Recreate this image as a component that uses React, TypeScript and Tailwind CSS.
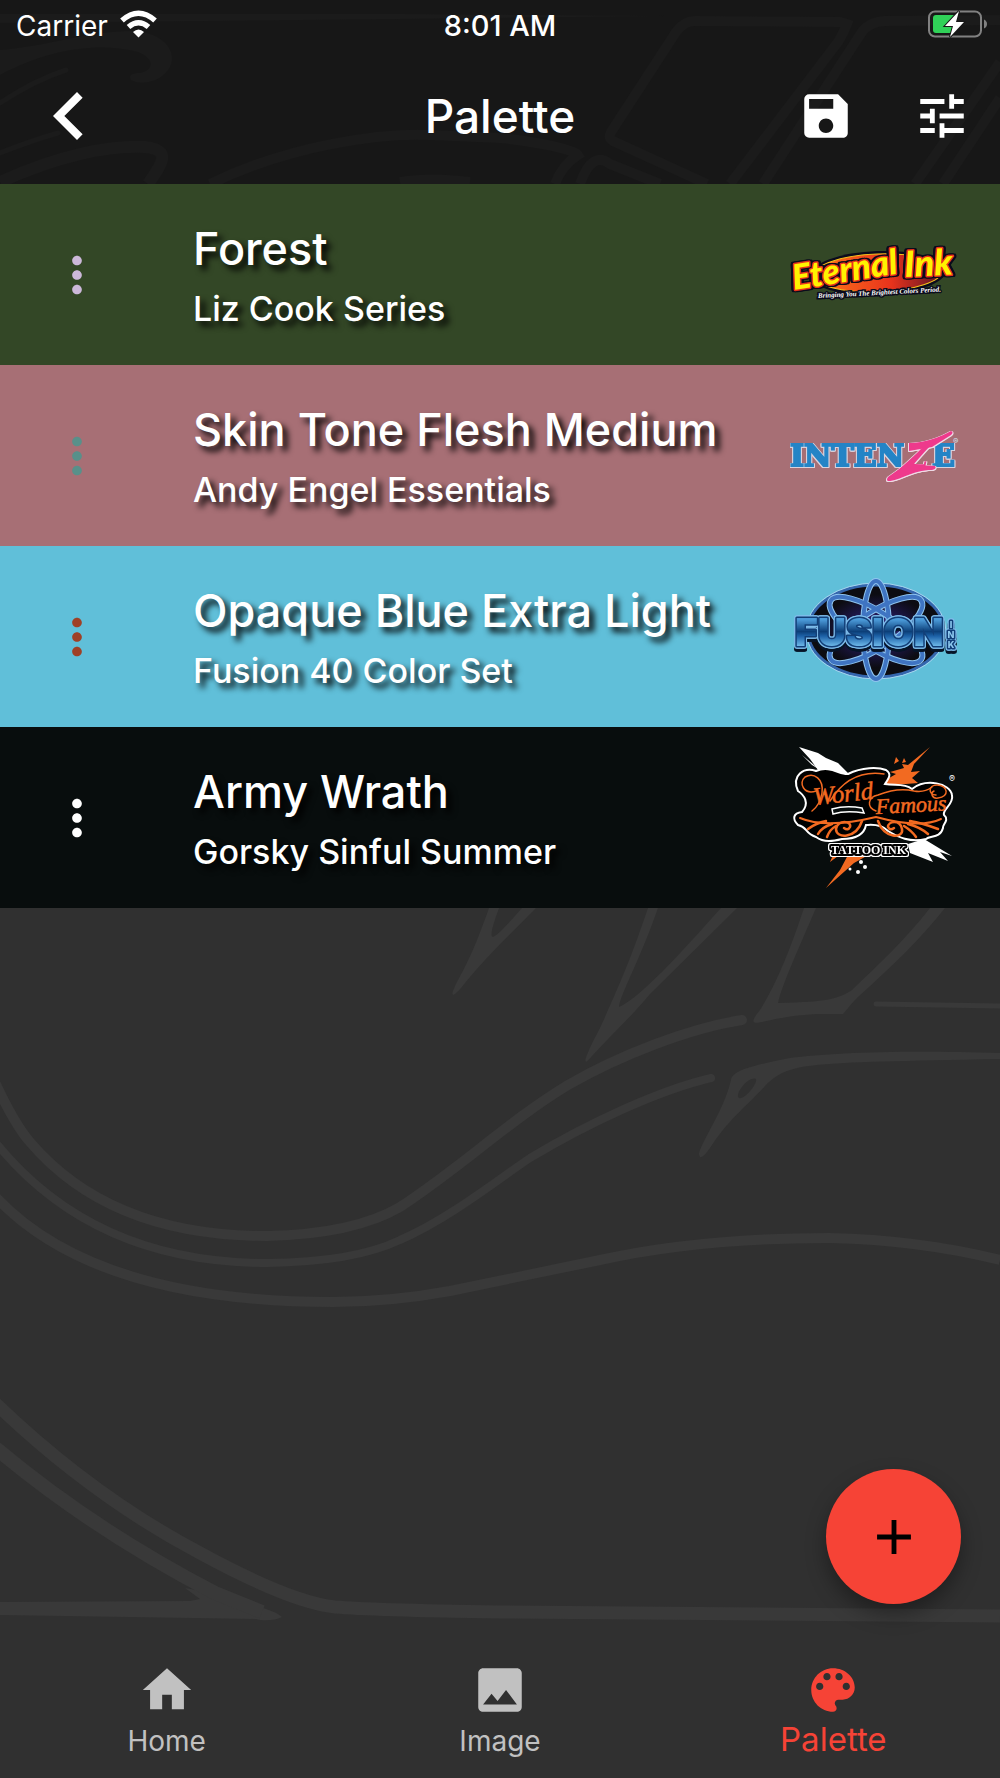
import { useState } from 'react'
import type { ReactNode } from 'react'
import {
  MdAdd, MdChevronLeft, MdHome, MdImage, MdMoreVert, MdSave, MdTune,
} from 'react-icons/md'

// Faint line art behind the whole screen
function Backdrop() {
  return (
    <svg
      className="absolute inset-0 h-full w-full"
      viewBox="0 0 1000 1778"
      preserveAspectRatio="xMidYMin slice"
      fill="none"
      stroke="#393939"
      strokeWidth="10"
      aria-hidden="true"
    >
      <g fill="#393939" stroke="none">
        <path d="M0 14L400 14L665 16L400 19L0 23z" />
        <path d="M0 50C50 46 90 30 135 31C172 34 182 62 162 76C152 84 138 84 131 80C128 75 132 73 140 73C155 70 154 58 138 52C100 42 50 48 0 75z" />
        <path d="M489 908C476 945 468 962 457 982C448 1000 454 996 461 988C486 956 512 933 536 908L522 908C508 924 498 935 493 937C489 937 494 922 499 908z" />
        <path d="M648 908C632 955 622 980 600 1028C580 1066 584 1066 592 1056C612 1034 630 1018 650 994L737 908L721 908C680 954 640 998 619 1007C620 995 640 960 658 908z" />
        <path d="M804 908C790 950 776 985 760 1010C750 1022 752 1024 762 1022C802 1013 815 1014 843 1014C848 1008 852 1003 858 997C890 968 920 940 945 908L930 908C905 940 878 965 852 990C840 998 830 1002 778 1003C782 985 798 950 816 908z" />
        <path fillRule="evenodd" d="M1000 1053C897 1050 830 1053 790 1058C755 1065 732 1070 731 1080C724 1110 705 1135 699 1153C699 1160 703 1158 710 1148C728 1120 745 1108 765 1086C790 1062 800 1063 1000 1059zM756 1079C750 1076 737 1090 738 1097C742 1103 758 1084 756 1079z" />
        <path d="M0 1602L190 1601L200 1599L185 1588L230 1596C255 1606 275 1610 282 1617C275 1621 262 1621 256 1619L0 1615z" />
      </g>
      <path d="M0 103Q35 80 66 70M0 153Q30 141 58 133M876 1004L1000 1006" strokeWidth="5" strokeLinecap="round" />
      <path d="M0 182C60 155 110 145 145 147C170 150 165 160 148 184" strokeWidth="12" />
      <path d="M210 184C290 145 380 133 430 135L500 138C540 142 575 150 578 155Q562 165 555 184" />
      <path d="M707 184L613 141Q608 138 611 132L676 32Q684 21 695 21L840 22L847 24Q844 32 838 42L730 184" />
      <path d="M1000 20L885 21Q867 22 860 35L763 184M1000 62L915 184M1000 98L943 184M580 184Q592 150 610 164L660 184M400 182Q430 177 470 182" />
      <path d="M-8 1076Q14 1124 30 1142Q110 1236 267 1236Q354 1234 400 1207C460 1168 510 1120 568 1085C620 1055 690 1028 742 1020" strokeLinecap="round" />
      <path d="M-8 1138Q90 1263 267 1263Q354 1262 400 1240C450 1218 500 1178 530 1158C590 1122 660 1090 711 1078" strokeWidth="8" strokeLinecap="round" />
      <path d="M-8 1193Q90 1302 333 1302Q390 1302 450 1291L600 1260Q700 1238 829 1238Q920 1240 1000 1260" />
      <path d="M-8 1400Q90 1495 200 1553Q290 1602 335 1607Q370 1610 500 1612L1000 1616" strokeWidth="13" />
      <path d="M-8 1445Q90 1528 215 1593L262 1612" strokeWidth="14" />
    </svg>
  )
}

function WifiIcon() {
  return (
    <svg className="h-7 w-[37px]" viewBox="0 0 37 28" fill="none" stroke="white" aria-hidden="true">
      <path d="M2 10.5Q18.500 -4 35 10.500" strokeWidth="5.500" />
      <path d="M8.500 17Q18.500 8.500 28.500 17" strokeWidth="5.500" />
      <path d="M13 22Q18.500 17 24 22L18.500 27.500z" fill="white" stroke="none" />
    </svg>
  )
}

function BatteryIcon() {
  return (
    <svg className="h-7 w-[60px]" viewBox="0 0 60 28" aria-hidden="true">
      <rect x="1" y="1.500" width="52" height="25" rx="6" fill="none" stroke="#818181" strokeWidth="2" />
      <rect x="5" y="5" width="23" height="18" rx="3" fill="#30d158" />
      <path d="M56 9.500Q59 11 59 14T56 18.500z" fill="#818181" />
      <path d="M31 1L17 16H25L22 27L36 12H28z" fill="white" stroke="#171717" strokeWidth="2" paintOrder="stroke" />
    </svg>
  )
}

function PaletteIcon({ className }: { className?: string }) {
  return (
    <svg className={className} viewBox="0 0 24 24" fill="currentColor" aria-hidden="true">
      <path d="M12 3c-4.970 0-9 4.030-9 9s4.030 9 9 9c.830 0 1.500-.670 1.500-1.500 0-.390-.150-.740-.390-1.010-.230-.260-.380-.610-.380-.990 0-.830.670-1.500 1.500-1.500H16c2.760 0 5-2.240 5-5 0-4.420-4.030-8-9-8zm-5.500 9c-.830 0-1.500-.670-1.500-1.500S5.670 9 6.500 9 8 9.670 8 10.500 7.330 12 6.500 12zm3-4C8.670 8 8 7.330 8 6.500S8.670 5 9.500 5s1.500.670 1.500 1.500S10.330 8 9.500 8zm5 0c-.830 0-1.500-.670-1.500-1.500S13.670 5 14.500 5s1.500.670 1.500 1.500S15.330 8 14.500 8zm3 4c-.830 0-1.500-.670-1.500-1.500S16.670 9 17.500 9s1.500.670 1.500 1.500-.670 1.500-1.500 1.500z" />
    </svg>
  )
}

function EternalInkLogo() {
  return (
    <svg className="h-[145px] w-[170px]" viewBox="0 0 170 145" role="img" aria-label="Eternal Ink">
      <defs>
        <linearGradient id="eternal" x1="0" x2="1">
          <stop offset="0" stopColor="#ff7a1a" />
          <stop offset="0.6" stopColor="#e8331c" />
          <stop offset="1" stopColor="#5b1426" />
        </linearGradient>
      </defs>
      <ellipse cx="88" cy="71" rx="68" ry="22" fill="#0b0b1c" transform="rotate(-2 88 71)" />
      <ellipse cx="88" cy="71" rx="64" ry="19" fill="url(#eternal)" stroke="#f5c21b" transform="rotate(-2 88 71)" />
      <g
        className="[filter:drop-shadow(2px_0_0_#0b0b1c)_drop-shadow(-2px_0_0_#0b0b1c)_drop-shadow(0_1px_0_#0b0b1c)_drop-shadow(0_-1px_0_#0b0b1c)]"
        fontFamily="Lato, sans-serif"
        fontStyle="italic"
        fontWeight="900"
        stroke="#e8331c"
        strokeWidth="3"
        strokeLinejoin="round"
        fill="#fff200"
        paintOrder="stroke"
      >
        <text x="4" y="88" fontSize="35" transform="rotate(-9 4 88)">Eternal</text>
        <text x="115" y="75" fontSize="36" transform="rotate(-3 115 75)">Ink</text>
      </g>
      <text x="28" y="96" fontSize="7" fontFamily="'Liberation Serif', serif" fontStyle="italic" fontWeight="700" fill="white" stroke="#0b0b1c" strokeWidth="3" paintOrder="stroke" transform="rotate(-3 28 96)">
        Bringing You The Brightest Colors Period.
      </text>
    </svg>
  )
}

function IntenzeLogo() {
  return (
    <svg className="h-[145px] w-[170px]" viewBox="0 0 170 145" role="img" aria-label="Intenze">
      <g
        className="[filter:drop-shadow(1px_0_0_#d9d3de)_drop-shadow(-1px_0_0_#d9d3de)_drop-shadow(0_1px_0_#d9d3de)]"
        fontFamily="'DejaVu Serif', serif"
        fontWeight="700"
        fontSize="30"
        fill="#2484c6"
        stroke="#2484c6"
        strokeWidth="2"
      >
        <text x="0" y="83">INTEN</text>
        <text x="142" y="83">E</text>
      </g>
      <g className="[filter:drop-shadow(1px_0_0_#eedbe6)_drop-shadow(-1px_0_0_#eedbe6)_drop-shadow(0_1px_0_#eedbe6)]" fill="#ee3a8c">
        <path d="M119 60C135 60 150 54 161 48Q164 49 161 52L142 64L119 68z" />
        <path d="M119 79C132 84 138 82 145 83Q147 86 142 87C122 87 110 98 98 98Q96 97 98 94z" />
        <text x="118" y="83" fontFamily="'DejaVu Serif', serif" fontStyle="italic" fontWeight="700" fontSize="28">Z</text>
        <path d="M152 53L112 87L104 91L138 60z" />
      </g>
      <text x="163" y="61" fontSize="8" fontFamily="Inter, sans-serif" fill="#cfe3f2">®</text>
    </svg>
  )
}

function FusionLogo() {
  return (
    <svg className="h-[145px] w-[170px]" viewBox="0 0 170 145" role="img" aria-label="Fusion Ink">
      <defs>
        <radialGradient id="core">
          <stop offset="0" stopColor="#4a35b0" />
          <stop offset="0.4" stopColor="#1f1850" />
          <stop offset="0.8" stopColor="#0c0c12" />
        </radialGradient>
        <linearGradient id="steel" x1="0" y1="0" x2="0" y2="1">
          <stop offset="0.25" stopColor="#4b9ad8" />
          <stop offset="0.5" stopColor="#0c3f78" />
          <stop offset="0.6" stopColor="#1d62a8" />
          <stop offset="0.8" stopColor="#69b4e6" />
        </linearGradient>
      </defs>
      <ellipse cx="86" cy="67" rx="68" ry="46" fill="url(#core)" stroke="#3566ad" strokeWidth="3" />
      <ellipse cx="86" cy="67" rx="70" ry="48" fill="none" stroke="#a6d3ee" />
      <g fill="none" stroke="#8fc4ee" strokeWidth="6">
        <ellipse cx="86" cy="66" rx="13" ry="49" />
        <ellipse cx="86" cy="66" rx="54" ry="18" transform="rotate(33 86 66)" />
        <ellipse cx="86" cy="66" rx="54" ry="18" transform="rotate(-33 86 66)" />
      </g>
      <g fill="none" stroke="#3f74c2" strokeWidth="4">
        <ellipse cx="86" cy="66" rx="13" ry="49" />
        <ellipse cx="86" cy="66" rx="54" ry="18" transform="rotate(33 86 66)" />
        <ellipse cx="86" cy="66" rx="54" ry="18" transform="rotate(-33 86 66)" />
      </g>
      <g
        className="[filter:drop-shadow(1px_0_0_#7dbbea)_drop-shadow(-1px_0_0_#7dbbea)_drop-shadow(0_-1px_0_#7dbbea)_drop-shadow(0_1px_0_#7dbbea)_drop-shadow(0_3px_0_#061428)]"
        fontFamily="Inter, sans-serif"
        stroke="#123f78"
        strokeWidth="3"
        strokeLinejoin="round"
        paintOrder="stroke"
      >
        <text x="5" y="82" fontWeight="900" fontSize="39" fill="url(#steel)">FUSION</text>
        <g fontWeight="800" fontSize="9" fill="#8cc8ee" textAnchor="middle">
          <text x="161" y="64">I</text>
          <text x="161" y="74">N</text>
          <text x="161" y="84">K</text>
        </g>
      </g>
    </svg>
  )
}

function WorldFamousLogo() {
  return (
    <svg className="h-[145px] w-[170px]" viewBox="0 0 170 145" role="img" aria-label="World Famous Tattoo Ink">
      {/* splatter */}
      <g fill="white">
        <path d="M9 2L28 8L36 13L48 18L60 30L50 38L34 28L28 25L20 14z" />
        <path d="M12 10L30 25L22 20z" />
        <path d="M118 99L134 94L162 111L150 107L158 116L138 108L143 117L120 108z" />
        <circle cx="71" cy="117" r="2" />
        <circle cx="75" cy="122" r="2" />
        <circle cx="60" cy="124" r="1.500" />
        <circle cx="68" cy="127" r="2" />
      </g>
      <g fill="#f26a21">
        <path d="M140 2L118 20L112 19L114 23L100 27L106 29L94 36L92 41L128 38L122 33L130 26L121 27L124 19z" />
        <path d="M106 12L109 16L104 19zM114 13L116 17L112 18z" />
        <path d="M82 108L64 118L36 143L50 125L58 110zM40 117L52 108L44 108z" />
      </g>
      <path
        d="M8 46C1 30 14 22 26 26C40 20 50 30 58 29C72 22 88 22 96 25C102 29 99 33 95 39C105 41 114 38 122 44C136 33 160 38 162 50C164 60 152 64 154 70C160 75 152 80 153 83C150 94 140 90 136 94C120 98 108 92 98 86C90 78 80 80 76 80C74 90 66 94 52 94C44 96 34 98 26 92C14 88 18 82 8 80C2 74 3 68 12 67C20 58 14 50 8 46z"
        fill="black"
        stroke="white"
        strokeWidth="2"
      />
      <path d="M42 64Q56 60 72 63L74 68Q56 65 43 69z" fill="#080d0d" stroke="white" strokeWidth="1.500" />
      <g fill="none" stroke="#f26a21" strokeWidth="1.500" strokeLinecap="round">
        <path d="M26 46C14 50 8 38 15 32C24 27 34 34 32 48Q30 60 22 66" />
        <path d="M40 56Q60 24 94 29" />
        <path d="M86 66C76 62 78 52 88 50Q108 42 124 46Q134 48 142 42" />
        <path d="M146 50C138 50 138 40 147 40C158 40 160 52 148 53C142 54 140 48 144 46" />
        <path d="M10 73Q36 84 86 72Q130 84 151 74" strokeWidth="2" />
        <path d="M36 76Q26 78 18 84M42 79Q32 82 28 89M46 81Q40 84 37 92M72 76C66 94 46 94 46 84C48 74 62 76 60 82Q58 86 54 83" strokeWidth="2.500" />
        <path d="M120 76Q132 78 148 84M118 79Q130 82 138 89M114 81Q122 86 126 92M88 76C94 94 114 94 112 84C110 74 98 76 98 82Q100 86 104 83" strokeWidth="2.500" />
      </g>
      <g fontFamily="'Liberation Serif', serif" fontStyle="italic" fill="#f26a21" stroke="#f26a21" strokeWidth="0.500">
        <text x="24" y="60" fontSize="25" transform="rotate(-6 24 60)">World</text>
        <text x="86" y="69" fontSize="22" transform="rotate(-3 86 69)">Famous</text>
      </g>
      <text
        className="[filter:drop-shadow(1px_0_0_white)_drop-shadow(-1px_0_0_white)_drop-shadow(0_1px_0_white)_drop-shadow(0_-1px_0_white)]"
        x="41"
        y="109"
        fontSize="12"
        fontFamily="'Liberation Serif', serif"
        fontWeight="700"
        fill="white"
        stroke="black"
        strokeWidth="4"
        strokeLinejoin="round"
        paintOrder="stroke"
      >
        TATTOO INK
      </text>
      <text x="159" y="37" fontSize="9" fontFamily="Inter, sans-serif" fill="white">®</text>
    </svg>
  )
}

interface Ink {
  name: string
  series: string
  row: string
  dots: string
  logo: ReactNode
}

const inks: Ink[] = [
  { name: 'Forest', series: 'Liz Cook Series', row: 'bg-[#334726]', dots: 'text-[#ccb8d9]', logo: <EternalInkLogo /> },
  { name: 'Skin Tone Flesh Medium', series: 'Andy Engel Essentials', row: 'bg-[#a76f75]', dots: 'text-[#58908a]', logo: <IntenzeLogo /> },
  { name: 'Opaque Blue Extra Light', series: 'Fusion 40 Color Set', row: 'bg-[#60bfd9]', dots: 'text-[#9f4026]', logo: <FusionLogo /> },
  { name: 'Army Wrath', series: 'Gorsky Sinful Summer', row: 'bg-[#080d0d]', dots: 'text-white', logo: <WorldFamousLogo /> },
]

const tabs = [
  { label: 'Home', icon: MdHome },
  { label: 'Image', icon: MdImage },
  { label: 'Palette', icon: PaletteIcon },
]

export default function App() {
  const [active, setActive] = useState('Palette')

  return (
    <div className="relative flex min-h-screen flex-col overflow-hidden bg-[#303030] font-['Inter',sans-serif] text-white">
      <Backdrop />

      <header className="relative bg-black/52">
        {/* Status bar */}
        <div className="grid h-12 grid-cols-3 items-center px-4 text-[28px] leading-8">
          <div className="flex items-center gap-3">
            <span className="pt-1">Carrier</span>
            <WifiIcon />
          </div>
          <span className="pt-1 text-center text-[29px] font-medium">8:01 AM</span>
          <div className="-mr-1 flex justify-end">
            <BatteryIcon />
          </div>
        </div>

        <div className="grid h-[136px] grid-cols-3 items-center px-[29px]">
          <button type="button" aria-label="Back" className="-ml-2 justify-self-start">
            <MdChevronLeft className="size-24" />
          </button>
          <h1 className="text-center text-[46px] leading-[56px] font-medium">Palette</h1>
          <div className="flex justify-end gap-[58px]">
            <button type="button" aria-label="Save palette">
              <MdSave className="size-[58px]" />
            </button>
            <button type="button" aria-label="Filters">
              <MdTune className="size-[58px]" />
            </button>
          </div>
        </div>
      </header>

      <main className="relative flex-1">
        <ul>
          {inks.map(ink => (
            <li key={ink.name} className={`flex h-[181px] items-center pr-10 pl-12 ${ink.row}`}>
              <button type="button" aria-label={`Options for ${ink.name}`} className={ink.dots}>
                <MdMoreVert className="size-[58px]" />
              </button>
              <div className="ml-[87px] flex-1 pt-1.5 font-medium [text-shadow:5px_5px_6px_black]">
                <h2 className="text-[45px] leading-[56px]">{ink.name}</h2>
                <p className="pt-1.5 text-[34px] leading-[52px]">{ink.series}</p>
              </div>
              {ink.logo}
            </li>
          ))}
        </ul>

        <button
          type="button"
          aria-label="Add color"
          className="absolute right-[39px] bottom-[37px] flex size-[135px] items-center justify-center rounded-full bg-[#f64336] text-black shadow-[0_10px_20px_rgba(0,0,0,0.35)]"
        >
          <MdAdd className="size-[58px]" />
        </button>
      </main>

      <nav className="relative grid h-[137px] grid-cols-3 bg-[#303030]">
        {tabs.map(tab => {
          const TabIcon = tab.icon
          const on = active === tab.label
          return (
            <button
              key={tab.label}
              type="button"
              onClick={() => setActive(tab.label)}
              className={`flex flex-col items-center pt-5 ${on ? 'text-[#f64336]' : 'text-[#c1c1c1]'}`}
            >
              <TabIcon className="size-[58px]" />
              <span className={on ? 'text-[33px] leading-10' : 'text-[28px] leading-[44px]'}>{tab.label}</span>
            </button>
          )
        })}
      </nav>
    </div>
  )
}
